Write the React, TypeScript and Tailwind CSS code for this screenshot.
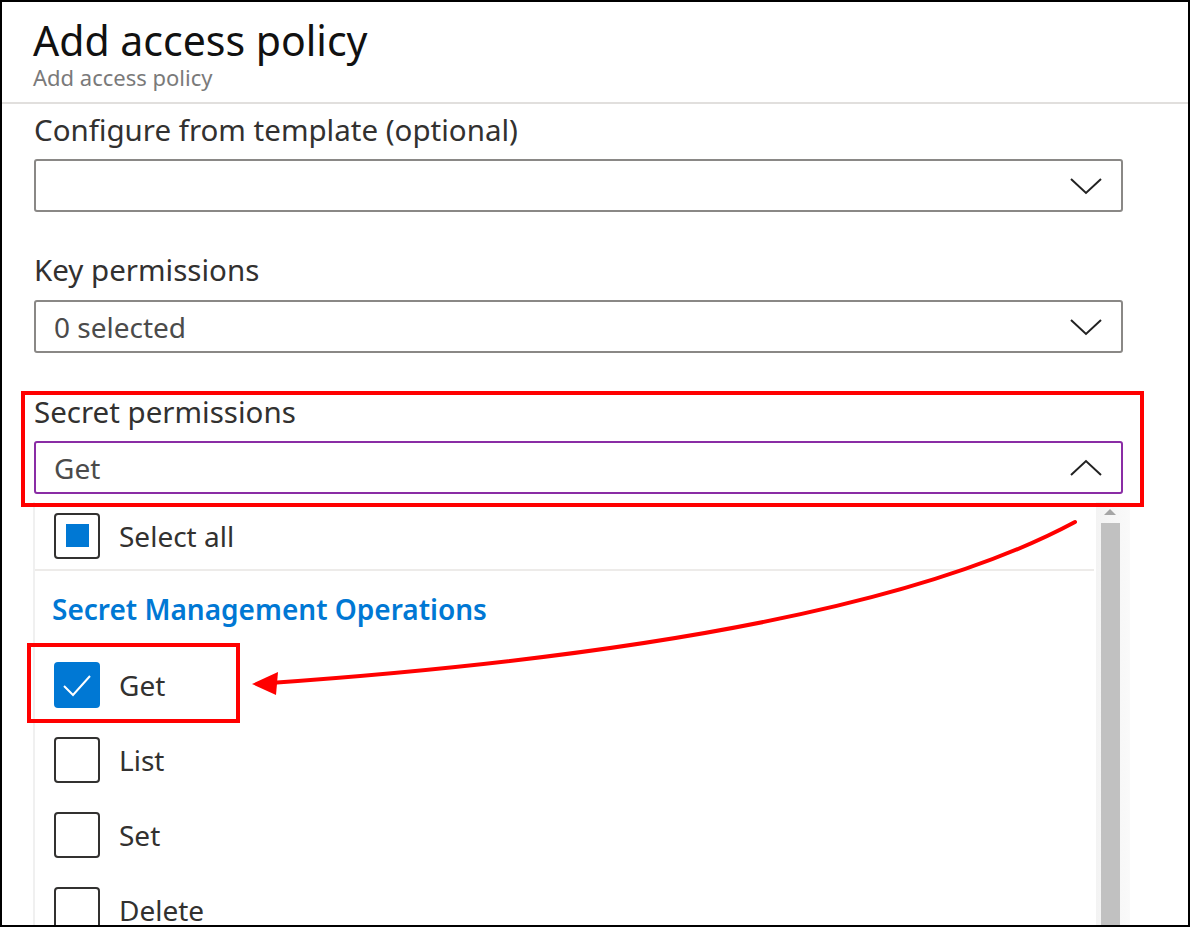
const font = { fontFamily: '"Segoe UI", "Noto Sans", "Open Sans", sans-serif' };

const Chevron = ({ up }: { up?: boolean }) => (
  <svg width="32" height="18" viewBox="0 0 32 18" className="mr-[3px]">
    <polyline
      points={up ? "1,16 16,2 31,16" : "1,2 16,16 31,2"}
      fill="none"
      stroke="#222"
      strokeWidth="2"
    />
  </svg>
);

const Dropdown = ({
  value,
  open,
}: {
  value?: string;
  open?: boolean;
}) => (
  <div
    className={`h-[53px] rounded-[3px] border-2 flex items-center justify-between pl-[18px] pr-[16px] ${
      open ? "border-[#8a2da5]" : "border-[#8a8886]"
    }`}
  >
    <span className="text-[28px] text-[#4b4b4b]">{value}</span>
    <Chevron up={open} />
  </div>
);

const Box = ({ checked }: { checked?: boolean }) =>
  checked ? (
    <span className="size-[46px] rounded-[4px] bg-[#0078d4] flex items-center justify-center">
      <svg width="46" height="46" viewBox="0 0 46 46">
        <polyline points="10,24 19,33 36,14" fill="none" stroke="#fff" strokeWidth="2" />
      </svg>
    </span>
  ) : (
    <span className="size-[46px] rounded-[4px] border-2 border-[#323130] bg-white" />
  );

const Row = ({ label, checked }: { label: string; checked?: boolean }) => (
  <div className="h-[75px] flex items-center gap-[19px] pl-[19px]">
    <Box checked={checked} />
    <span className="text-[28px] text-[#323130]">{label}</span>
  </div>
);

const Label = ({ children }: { children: string }) => (
  <label className="block text-[29.5px] leading-[34px] text-[#323130]">{children}</label>
);

export default function App() {
  return (
    <div
      style={font}
      className="relative w-[1190px] h-[927px] border-2 border-black bg-white overflow-hidden"
    >
      <div className="pl-[31px] pt-[16px] pb-[10px] border-b-2 border-[#e1dfdd]">
        <h1 className="text-[41px] leading-[44px] text-[#111]">Add access policy</h1>
        <p className="text-[22px] leading-[30px] text-[#7a7a7a]">Add access policy</p>
      </div>

      <div className="pl-[32px] pr-[65px]">
        <div className="pt-[9px]">
          <Label>Configure from template (optional)</Label>
          <div className="mt-[12px]">
            <Dropdown />
          </div>
        </div>

        <div className="pt-[41px]">
          <Label>Key permissions</Label>
          <div className="mt-[13px]">
            <Dropdown value="0 selected" />
          </div>
        </div>

        <div className="pt-[42px]">
          <Label>Secret permissions</Label>
          <div className="mt-[12px]">
            <Dropdown value="Get" open />
          </div>
        </div>
      </div>

      {/* open dropdown list */}
      <div className="ml-[31px] mr-[58px] mt-[8px] flex border-l-2 border-[#f0f0f0]">
        <div className="flex-1">
          <div className="h-[69px] flex items-center gap-[19px] pl-[19px] border-b-2 border-[#edebe9] mr-[2px]">
            <span className="size-[46px] rounded-[4px] border-2 border-[#323130] flex items-center justify-center">
              <span className="size-[23px] bg-[#0078d4]" />
            </span>
            <span className="text-[28px] text-[#323130]">Select all</span>
          </div>
          <div className="h-[76px] flex items-center pl-[17px] text-[28px] font-semibold text-[#0078d4]">
            Secret Management Operations
          </div>
          <Row label="Get" checked />
          <Row label="List" />
          <Row label="Set" />
          <Row label="Delete" />
        </div>
        <div className="w-[34px] bg-gradient-to-r from-[#f3f3f3] to-[#fafafa] flex flex-col items-start pl-[5px] pt-[7px]">
          <span className="ml-[3px] w-0 h-0 border-l-[6px] border-r-[6px] border-b-[6px] border-l-transparent border-r-transparent border-b-[#a6a6a6]" />
          <span className="w-[19px] flex-1 bg-[#c1c1c1] mt-[8px]" />
        </div>
      </div>

      {/* annotations */}
      <div className="absolute left-[19px] top-[389px] w-[1123px] h-[116px] border-4 border-[#ff0000]" />
      <div className="absolute left-[25px] top-[641px] w-[213px] h-[80px] border-4 border-[#ff0000]" />
      <svg className="absolute left-0 top-0 pointer-events-none" width="1190" height="927">
        <path
          d="M1073 520 Q 850 640 268 681"
          fill="none"
          stroke="#ff0000"
          strokeWidth="4"
          strokeLinecap="round"
        />
        <polygon points="250,682 276,670 274,693" fill="#ff0000" />
      </svg>
    </div>
  );
}
